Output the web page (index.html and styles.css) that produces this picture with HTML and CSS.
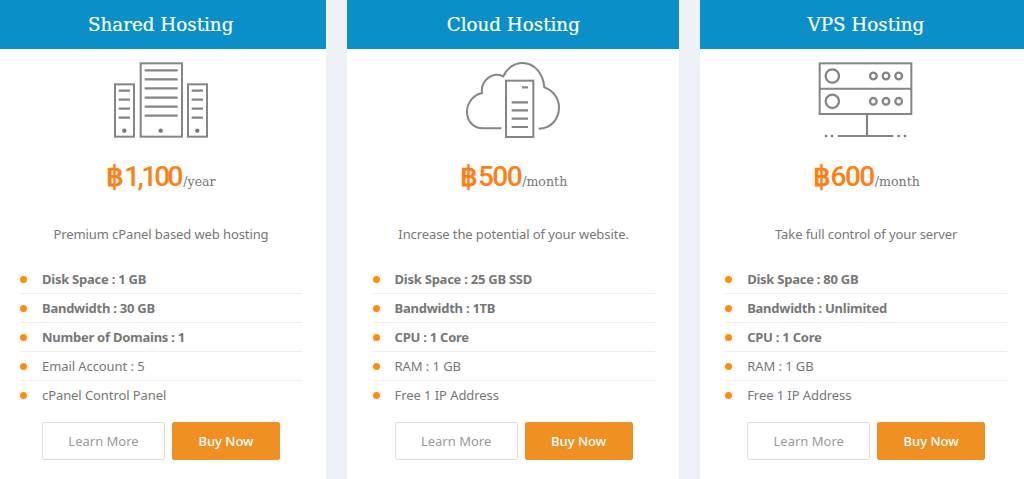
FILE: index.html
```html
<!DOCTYPE html>
<html lang="en">
<head>
<meta charset="utf-8">
<title>Hosting plans</title>
<link rel="stylesheet" href="styles.css">
</head>
<body>
<main class="plans">
  <section class="card">
    <h2 class="card-title">Shared Hosting</h2>
    <div class="card-body">
      <svg class="icon" viewBox="336 186 294 228" aria-hidden="true">
        <g class="ln">
          <rect x="422" y="190" width="124" height="220"/>
          <rect x="345" y="253" width="57" height="157"/>
          <rect x="564" y="253" width="57" height="157"/>
          <path class="thick" d="M434 211H533M434 238H533M434 265H533M434 293H533M434 320H533M434 347H533M356 272H390M356 299H390M356 326H390M356 353H390M575 272H609M575 299H609M575 326H609M575 353H609"/>
        </g>
        <circle class="dot" cx="482" cy="392" r="6.5"/><circle class="dot" cx="373" cy="392" r="6.5"/><circle class="dot" cx="592" cy="392" r="6.5"/>
      </svg>
      <p class="price"><span class="amount"><span class="cur">฿</span><span class="tight">1,100</span></span><span class="per">/year</span></p>
      <p class="desc">Premium cPanel based web hosting</p>
      <ul class="features">
        <li class="strong">Disk Space : 1 GB</li>
        <li class="strong">Bandwidth : 30 GB</li>
        <li class="strong">Number of Domains : 1</li>
        <li>Email Account : 5</li>
        <li>cPanel Control Panel</li>
      </ul>
      <div class="actions"><a class="btn btn-ghost" href="#">Learn More</a><a class="btn btn-buy" href="#">Buy Now</a></div>
    </div>
  </section>
  <section class="card">
    <h2 class="card-title">Cloud Hosting</h2>
    <div class="card-body">
      <svg class="icon" viewBox="75 36 294 228" aria-hidden="true">
        <g class="ln">
          <path d="M184 235H127C100 235 81 213 81 186C81 158 100 135 126 129C122 100 145 74 172 74C178 74 185 76 190 79C200 55 222 39 248 39C282 39 310 70 313 112C338 120 357 144 357 172C357 208 332 236 296 236"/>
          <rect x="198" y="92" width="82" height="169"/>
          <path class="thick" d="M215 157H264M215 181H264M215 206H264M215 231H264M246 112H264"/>
        </g>
      </svg>
      <p class="price"><span class="amount"><span class="cur">฿</span>500</span><span class="per">/month</span></p>
      <p class="desc">Increase the potential of your website.</p>
      <ul class="features">
        <li class="strong">Disk Space : 25 GB SSD</li>
        <li class="strong">Bandwidth : 1TB</li>
        <li class="strong">CPU : 1 Core</li>
        <li>RAM : 1 GB</li>
        <li>Free 1 IP Address</li>
      </ul>
      <div class="actions"><a class="btn btn-ghost" href="#">Learn More</a><a class="btn btn-buy" href="#">Buy Now</a></div>
    </div>
  </section>
  <section class="card">
    <h2 class="card-title">VPS Hosting</h2>
    <div class="card-body">
      <svg class="icon" viewBox="81 36 294 228" aria-hidden="true">
        <g class="ln">
          <rect x="89" y="40" width="275" height="152"/>
          <path d="M89 116H364"/>
          <circle class="heavy" cx="127" cy="78" r="20"/><circle class="heavy" cx="127" cy="154" r="20"/>
          <circle class="heavy" cx="250" cy="78" r="10"/><circle class="heavy" cx="288" cy="78" r="10"/><circle class="heavy" cx="326" cy="78" r="10"/>
          <circle class="heavy" cx="250" cy="154" r="10"/><circle class="heavy" cx="288" cy="154" r="10"/><circle class="heavy" cx="326" cy="154" r="10"/>
          <path class="thick" d="M231 192V258M143 258H310"/>
        </g>
        <circle class="dot" cx="108" cy="258" r="4"/><circle class="dot" cx="126" cy="258" r="4"/><circle class="dot" cx="326" cy="258" r="4"/><circle class="dot" cx="345" cy="258" r="4"/>
      </svg>
      <p class="price"><span class="amount"><span class="cur">฿</span>600</span><span class="per">/month</span></p>
      <p class="desc">Take full control of your server</p>
      <ul class="features">
        <li class="strong">Disk Space : 80 GB</li>
        <li class="strong">Bandwidth : Unlimited</li>
        <li class="strong">CPU : 1 Core</li>
        <li>RAM : 1 GB</li>
        <li>Free 1 IP Address</li>
      </ul>
      <div class="actions"><a class="btn btn-ghost" href="#">Learn More</a><a class="btn btn-buy" href="#">Buy Now</a></div>
    </div>
  </section>
</main>
</body>
</html>
```

FILE: styles.css
```css
* { box-sizing: border-box; }
html, body { margin: 0; height: 479px; overflow: hidden; background: #eef2f6; }
body { font-family: "Noto Sans", "Open Sans", sans-serif; color: #777; }
.plans { display: flex; gap: 21px; margin-left: -5.6px; width: 1060px; }
.card { flex: 0 0 331.6px; height: 479px; background: #fff; }
.card-title {
  margin: 0; height: 49px; padding-left: 1px; background: #0a8fc8; color: #fff;
  font: 400 18.3px/49px "DejaVu Serif", serif; text-align: center;
  -webkit-text-stroke: 0.2px #fff;
}
.card-body { padding: 13px 24px 0 25.6px; display: flex; flex-direction: column; }
.icon { display: block; width: 98px; height: 76px; margin: 0 auto; }
.ln { fill: none; stroke: #858585; stroke-width: 6; }
.ln .thick { stroke-width: 6.5; }
.ln .heavy { stroke-width: 7; }
.dot { fill: #777; }
.price { margin: 22px 0 0; height: 34px; display: flex; justify-content: center; align-items: baseline; }
.amount { font: 500 28px/34px Roboto, "Noto Sans", sans-serif; color: #ff7f17; letter-spacing: -1.5px; }
.cur { font-weight: 700; letter-spacing: 0; }
.tight { letter-spacing: -2.7px; margin-right: 1.5px; }
.per { font: 400 12.6px/32px "DejaVu Serif", serif; color: #777; margin-left: 1px; }
.desc { margin: 31px 0 0; font-size: 13px; letter-spacing: -0.1px; line-height: 18px; text-align: center; color: #777; }
.features { list-style: none; margin: 22px 0 0; padding: 0; }
.features li {
  position: relative; height: 29px; padding-left: 22px;
  font-size: 13px; letter-spacing: -0.08px; line-height: 28px; color: #777;
  border-bottom: 1px solid #eee;
}
.features li:last-child { border-bottom: 0; }
.features li::before {
  content: ""; position: absolute; left: 0; top: 11px;
  width: 7px; height: 7px; border-radius: 50%; background: #ff8c0a;
}
.features .strong { font-weight: 700; letter-spacing: -0.25px; }
.actions { display: flex; gap: 7px; margin: 12px 0 0 22px; }
.btn {
  display: block; height: 38px; font-size: 13px; line-height: 36px; text-align: center;
  text-decoration: none; border-radius: 2px; border: 1px solid;
}
.btn-ghost { width: 123px; color: #999; border-color: #ddd; background: #fff; }
.btn-buy { width: 108px; color: #fff; font-weight: 500; border-color: #f09022; background: #f09022; }
```
